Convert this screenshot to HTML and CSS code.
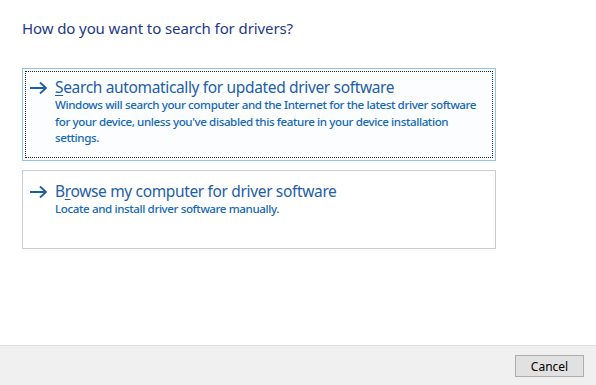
FILE: index.html
```html
<!DOCTYPE html>
<html lang="en">
<head>
    <meta charset="UTF-8">
    <title>Update Drivers</title>
    <link rel="stylesheet" href="styles.css">
</head>
<body>
    <div class="page">
        <h1 class="question">How do you want to search for drivers?</h1>

        <div class="choice selected">
            <div class="focus">
                <svg class="arrow" width="17" height="14" viewBox="0 0 17 14">
                    <path d="M0 7H16M10 1.5L16 7L10 12.5" fill="none" stroke="#1d5ea8" stroke-width="1.8"/>
                </svg>
                <div class="choice-text">
                    <div class="choice-title"><u>S</u>earch automatically for updated driver software</div>
                    <div class="choice-desc">Windows will search your computer and the Internet for the latest driver software for your device, unless you've disabled this feature in your device installation settings.</div>
                </div>
            </div>
        </div>

        <div class="choice">
            <div class="focus">
                <svg class="arrow" width="17" height="14" viewBox="0 0 17 14">
                    <path d="M0 7H16M10 1.5L16 7L10 12.5" fill="none" stroke="#1d5ea8" stroke-width="1.8"/>
                </svg>
                <div class="choice-text">
                    <div class="choice-title">B<u>r</u>owse my computer for driver software</div>
                    <div class="choice-desc">Locate and install driver software manually.</div>
                </div>
            </div>
        </div>
    </div>

    <div class="footer">
        <button class="btn">Cancel</button>
    </div>
</body>
</html>
```

FILE: styles.css
```css
html, body {
    margin: 0;
    height: 100%;
}
body {
    font-family: "Noto Sans", "Open Sans", sans-serif;
    background: #fff;
    display: flex;
    flex-direction: column;
    width: 596px;
    height: 385px;
    overflow: hidden;
}
.page {
    flex: 1;
    padding: 0 0 0 22px;
}
.question {
    font-size: 15px;
    font-weight: normal;
    letter-spacing: -0.1px;
    color: #1e3a87;
    margin: 18px 0 30px 0;
    line-height: 20px;
}
.choice {
    width: 474px;
    border: 1px solid #cccccc;
    margin-bottom: 9px;
    box-sizing: border-box;
}
.choice.selected {
    border-color: #8fc3ec;
    background: #fbfdff;
}
.focus {
    display: flex;
    align-items: flex-start;
    margin: 2px;
    padding: 5px 1px 10px 4px;
    border: 1px dotted transparent;
}
.choice.selected .focus {
    border-color: #222;
}
.choice:not(.selected) .focus {
    padding-top: 7px;
    padding-bottom: 28px;
}
.arrow {
    margin: 4px 8px 0 0;
    flex-shrink: 0;
}
.choice-title {
    font-size: 15.5px;
    letter-spacing: -0.35px;
    color: #1d5ea8;
    line-height: 20px;
}
.choice-title u {
    text-decoration-thickness: 1px;
    text-underline-offset: 2px;
}
.choice-desc {
    font-size: 11.6px;
    font-weight: 500;
    letter-spacing: -0.4px;
    color: #1468b5;
    line-height: 16.5px;
}
.footer {
    height: 39px;
    background: #f0f0f0;
    border-top: 1px solid #dfdfdf;
    display: flex;
    justify-content: flex-end;
    align-items: flex-start;
    padding-right: 12px;
}
.btn {
    margin-top: 9px;
    width: 69px;
    height: 22px;
    font-family: "Noto Sans", sans-serif;
    font-size: 12px;
    color: #000;
    background: #e1e1e1;
    border: 1px solid #adadad;
    padding: 0;
}
```
